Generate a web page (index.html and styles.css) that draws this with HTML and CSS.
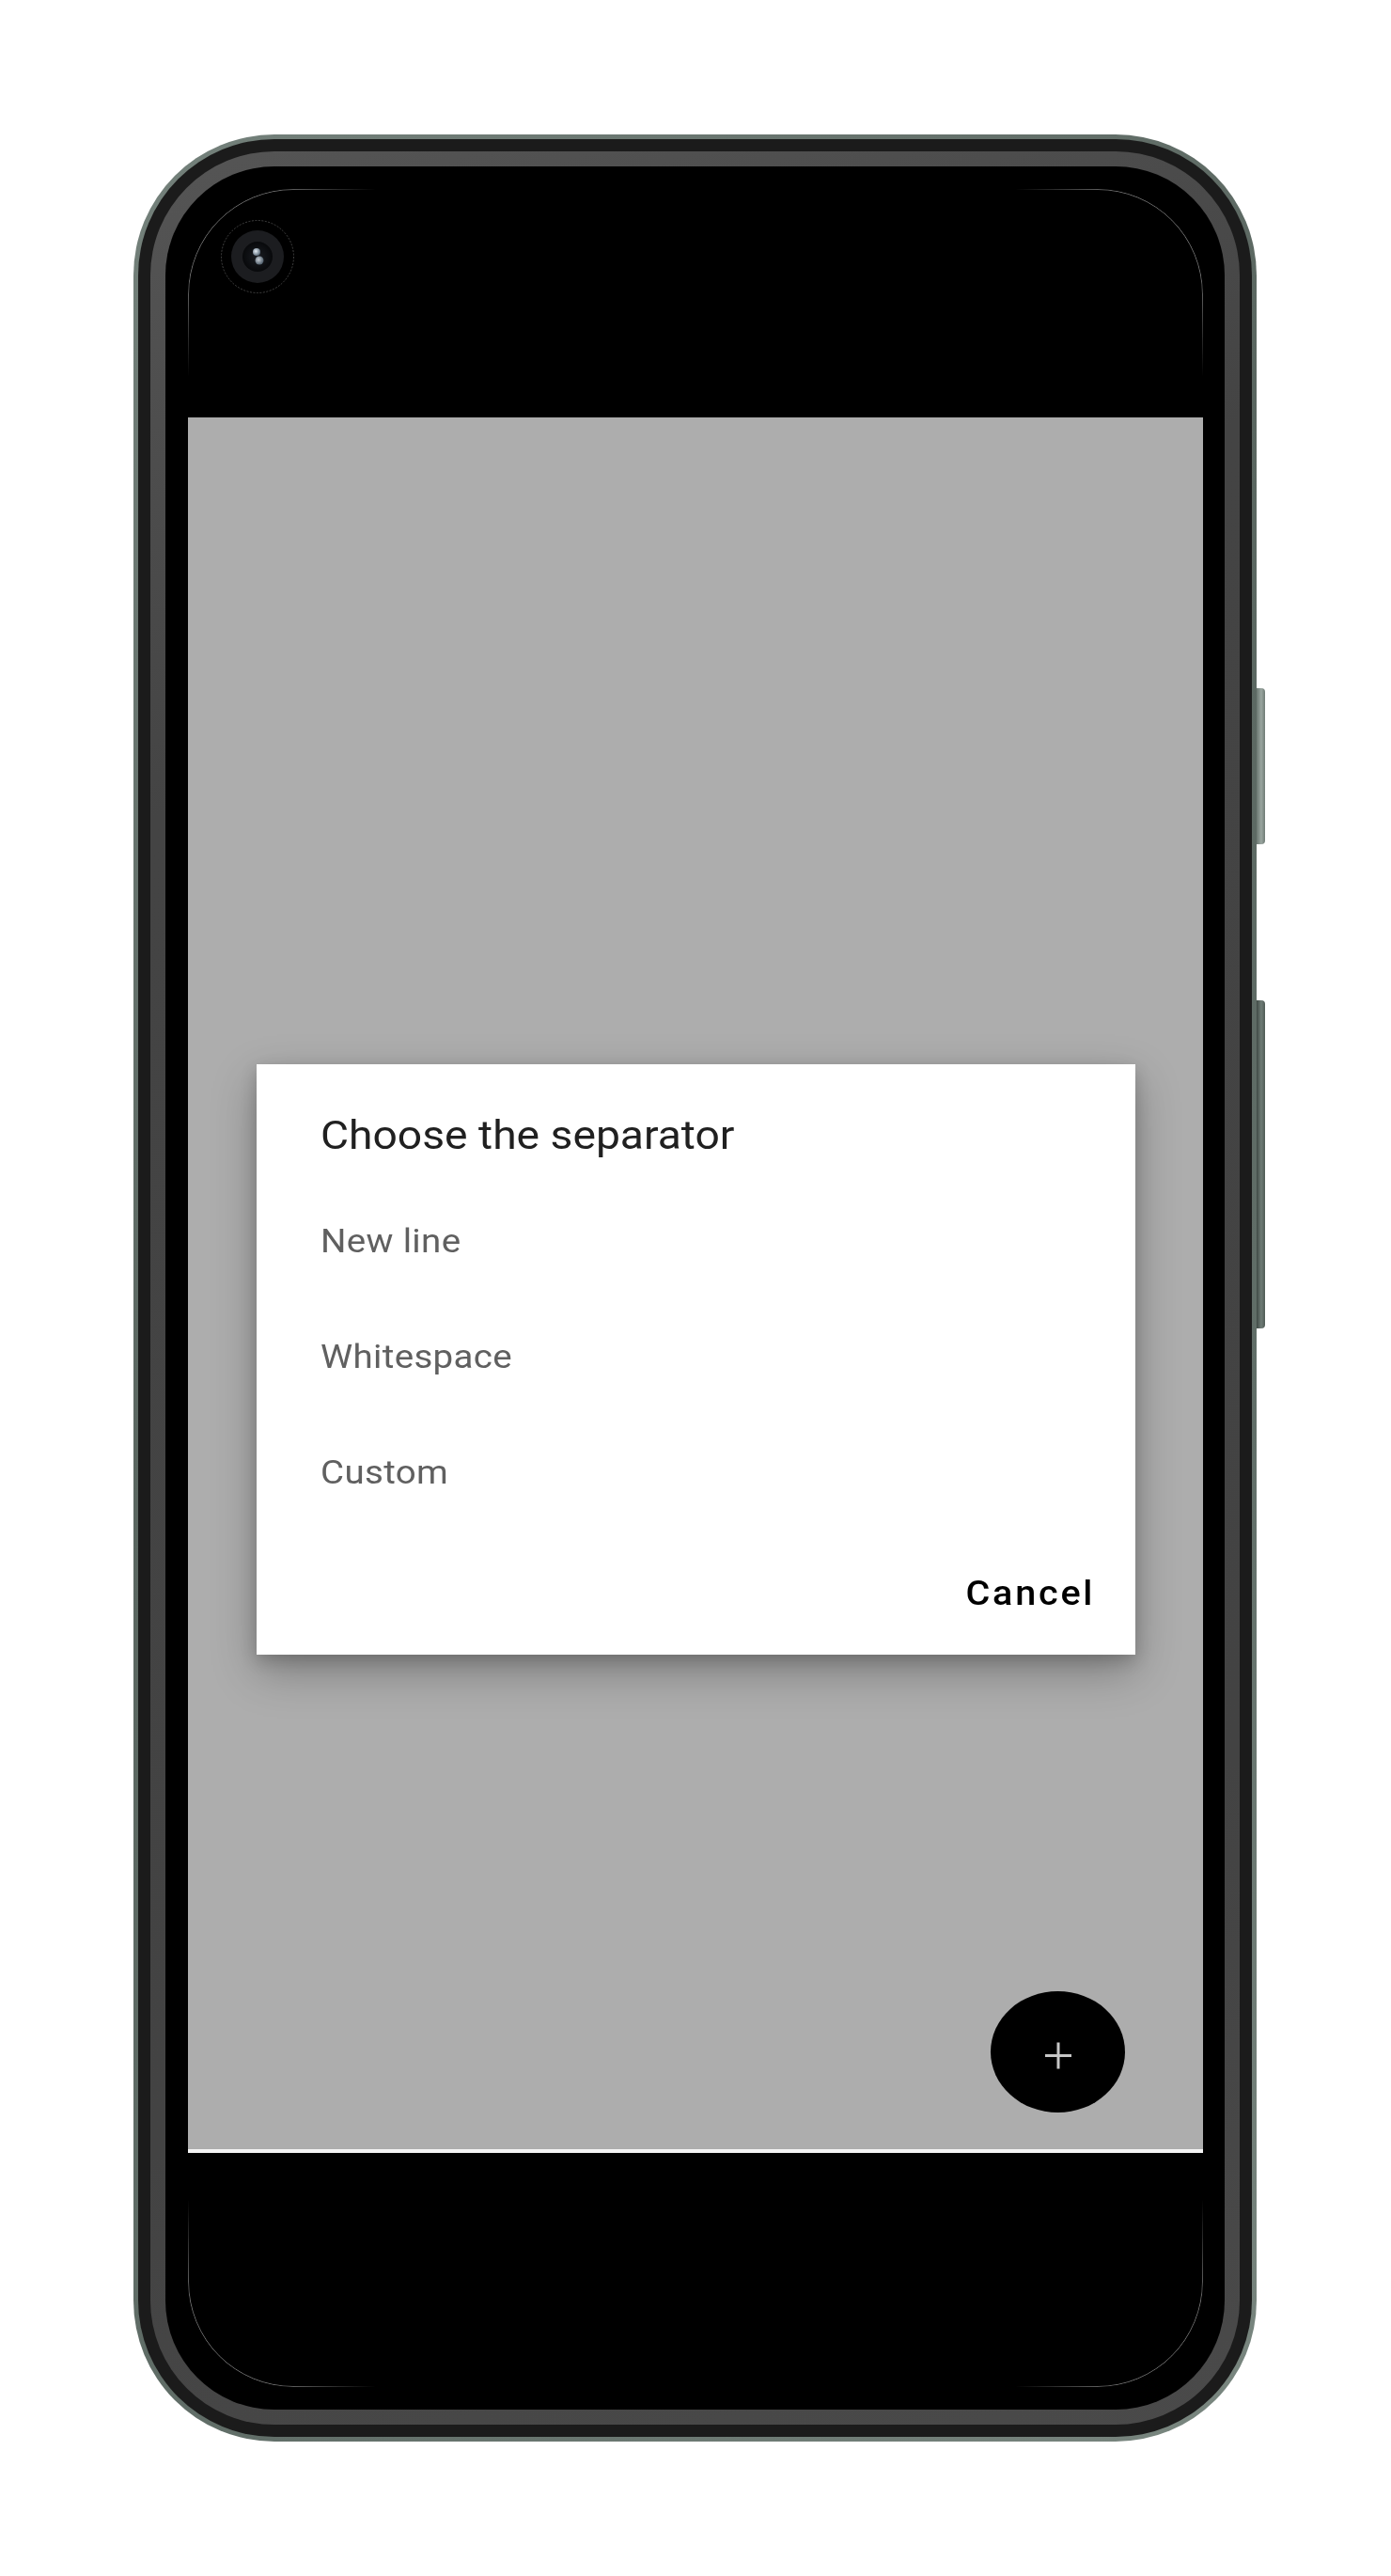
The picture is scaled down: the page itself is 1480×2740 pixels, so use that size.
FILE: index.html
```html
<!DOCTYPE html>
<html lang="en">
<head>
<meta charset="utf-8">
<title>Choose the separator</title>
<link rel="stylesheet" href="styles.css">
</head>
<body>
<div class="page">
  <div class="phone">
    <span class="side-btn side-btn-power"></span>
    <span class="side-btn side-btn-volume"></span>
    <div class="rim">
      <div class="band">
        <div class="bezel">
          <div class="display">
            <div class="statusbar">
              <svg class="camera" width="80" height="80" viewBox="0 0 80 80">
                <defs>
                  <radialGradient id="lens" cx="0.5" cy="0.5" r="0.5">
                    <stop offset="0" stop-color="#1a1d22"/>
                    <stop offset="1" stop-color="#08090b"/>
                  </radialGradient>
                  <radialGradient id="glint" cx="0.4" cy="0.4" r="0.6">
                    <stop offset="0" stop-color="#e6eef5"/>
                    <stop offset="1" stop-color="#5d6d7c"/>
                  </radialGradient>
                </defs>
                <circle cx="40" cy="40" r="38.5" fill="none" stroke="#5a5a5a" stroke-width="0.7" stroke-dasharray="2 1.5"/>
                <circle cx="40" cy="40" r="28" fill="#1c1d20"/>
                <circle cx="40" cy="40" r="16" fill="url(#lens)"/>
                <circle cx="39" cy="35" r="4" fill="url(#glint)"/>
                <circle cx="42" cy="44" r="4.5" fill="url(#glint)" opacity="0.85"/>
              </svg>
            </div>
            <div class="app">
              <div class="dialog">
                <h2 class="dialog-title"><span class="stretch">Choose the separator</span></h2>
                <ul class="options">
                  <li class="option"><span class="stretch">New line</span></li>
                  <li class="option"><span class="stretch">Whitespace</span></li>
                  <li class="option"><span class="stretch">Custom</span></li>
                </ul>
                <div class="actions">
                  <button class="text-btn"><span class="stretch stretch-right">Cancel</span></button>
                </div>
              </div>
              <button class="fab" aria-label="Add">
                <svg width="30" height="29" viewBox="0 0 30 29">
                  <path d="M1 14.5 H29 M15 0.5 V28.5" stroke="#c6c6c6" stroke-width="3" fill="none"/>
                </svg>
              </button>
            </div>
            <div class="navline"></div>
            <div class="navbar"></div>
          </div>
        </div>
      </div>
    </div>
  </div>
</div>
</body>
</html>
```

FILE: styles.css
```css
* {
  box-sizing: border-box;
}

html, body {
  margin: 0;
  padding: 0;
  background: #ffffff;
}

body {
  font-family: Roboto, "Noto Sans", "DejaVu Sans", sans-serif;
}

.page {
  width: 1480px;
  height: 2740px;
  padding-top: 143px;
}

.phone {
  position: relative;
  width: 1195px;
  height: 2454px;
  margin: 0 0 0 142px;
  padding: 5px;
  border-radius: 150px;
  background: linear-gradient(135deg, #74817b 0%, #5a6660 40%, #616e68 70%, #7a8780 100%);
}

.side-btn {
  position: absolute;
  left: 1195px;
  width: 9px;
  border-radius: 0 4px 4px 0;
  background: linear-gradient(90deg, #55605b 0%, #8e9a94 55%, #66726c 100%);
}

.side-btn-power {
  top: 589px;
  height: 166px;
  background: linear-gradient(90deg, #6b7771 0%, #9aa6a0 55%, #6f7b75 100%);
}

.side-btn-volume {
  top: 921px;
  height: 349px;
  background: linear-gradient(90deg, #3f4945 0%, #6f7c76 55%, #505b56 100%);
}

.rim {
  height: 100%;
  padding: 13px;
  border-radius: 145px;
  background: #1b1b1b;
}

.band {
  height: 100%;
  padding: 16px;
  border-radius: 132px;
  background: linear-gradient(160deg, #555555 0%, #444444 25%, #434343 75%, #4a4a4a 100%);
}

.bezel {
  height: 100%;
  padding: 24px 23px 24px 24px;
  border-radius: 116px;
  background: #000000;
}

.display {
  position: relative;
  display: flex;
  flex-direction: column;
  width: 1080px;
  height: 2338px;
  border-radius: 112px;
  background: #000000;
}

.display::after {
  content: "";
  position: absolute;
  inset: 0;
  border: 1px solid rgba(255, 255, 255, 0.45);
  border-radius: 112px;
  pointer-events: none;
  z-index: 0;
  -webkit-mask-image:
    linear-gradient(to right, #000 0, #000 90px, transparent 200px, transparent 880px, #000 990px, #000 100%),
    linear-gradient(to bottom, #000 0, #000 90px, transparent 200px, transparent 2138px, #000 2248px, #000 100%);
  -webkit-mask-composite: source-in;
  mask-image:
    linear-gradient(to right, #000 0, #000 90px, transparent 200px, transparent 880px, #000 990px, #000 100%),
    linear-gradient(to bottom, #000 0, #000 90px, transparent 200px, transparent 2138px, #000 2248px, #000 100%);
  mask-composite: intersect;
}

.statusbar {
  position: relative;
  height: 243px;
  flex: none;
  z-index: 1;
}

.camera {
  position: absolute;
  left: 34px;
  top: 32px;
}

.app {
  position: relative;
  z-index: 1;
  height: 1842px;
  flex: none;
  background: #adadad;
  padding-top: 688px;
}

.dialog {
  width: 935px;
  height: 628px;
  margin: 0 auto;
  padding: 51px 42px 0 68px;
  background: #ffffff;
  box-shadow: 0 18px 44px rgba(0, 0, 0, 0.28), 0 6px 16px rgba(0, 0, 0, 0.18);
}

.stretch {
  display: inline-block;
  transform: scaleX(1.1);
  transform-origin: left center;
  white-space: nowrap;
}

.stretch-right {
  transform-origin: right center;
}

.dialog-title {
  margin: 0;
  font-size: 42px;
  line-height: 49px;
  font-weight: 400;
  color: #202020;
}

.options {
  list-style: none;
  margin: 27px 0 0 0;
  padding: 0;
}

.option {
  height: 123px;
  font-size: 35px;
  line-height: 123px;
  color: #606060;
  letter-spacing: 0.3px;
}

.actions {
  display: flex;
  justify-content: flex-end;
  margin-top: 37px;
}

.text-btn {
  border: 0;
  padding: 0;
  background: transparent;
  font-family: Roboto, "Noto Sans", sans-serif;
  font-size: 36px;
  line-height: 60px;
  font-weight: 500;
  letter-spacing: 2.5px;
  color: #000000;
}

.fab {
  position: absolute;
  right: 83px;
  bottom: 39px;
  width: 143px;
  height: 129px;
  border: 0;
  padding: 7px 0 0 0;
  border-radius: 50%;
  background: #000000;
  display: flex;
  align-items: center;
  justify-content: center;
}

.fab svg {
  display: block;
}

.navline {
  height: 4px;
  flex: none;
  background: #f4f4f4;
  position: relative;
  z-index: 1;
}

.navbar {
  flex: 1;
}
```
